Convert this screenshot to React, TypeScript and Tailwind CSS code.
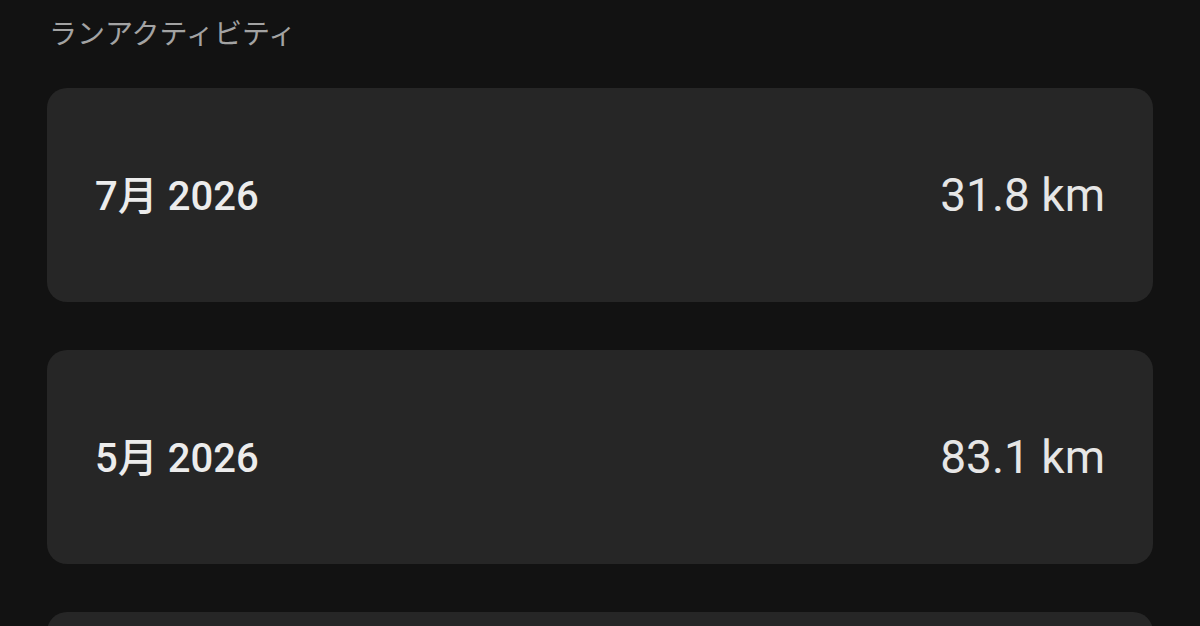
import React from "react";

const rows = [
  { month: "7月 2026", dist: "31.8 km" },
  { month: "5月 2026", dist: "83.1 km" },
  { month: "4月 2026", dist: "52.4 km" },
];

export default function App() {
  return (
    <div
      className="w-[1200px] h-[626px] overflow-hidden bg-[#121212] px-[47px]"
      style={{ fontFamily: 'Roboto, "Noto Sans CJK JP", sans-serif' }}
    >
      <div className="pt-[15px] pl-[2px] text-[28px] leading-[40px] text-[#a3a3a3]">
        ランアクティビティ
      </div>
      <div className="mt-[33px] flex flex-col gap-[48px]">
        {rows.map((r, i) => (
          <div
            key={r.month}
            className="h-[214px] shrink-0 rounded-[20px] bg-[#262626] flex items-center justify-between px-[48px]"
          >
            {i < 2 && (
              <>
                <span className="text-[40px] font-medium text-[#ececec] mt-[4px]">{r.month}</span>
                <span className="text-[46px] text-[#e6e6e6]">{r.dist}</span>
              </>
            )}
          </div>
        ))}
      </div>
    </div>
  );
}
